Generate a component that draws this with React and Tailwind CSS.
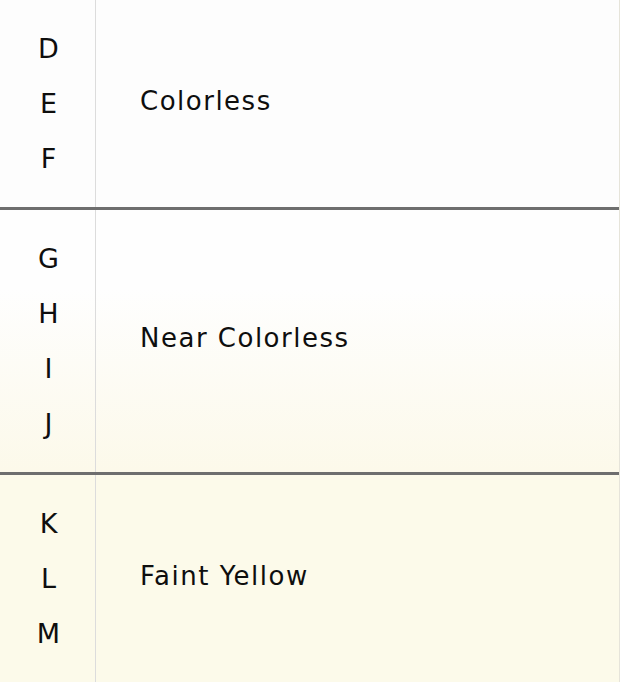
import React from 'react';

const rows = [
    { grades: ['D', 'E', 'F'], label: 'Colorless', bg: 'bg-[#fdfdfd]' },
    { grades: ['G', 'H', 'I', 'J'], label: 'Near Colorless', bg: 'bg-linear-to-b from-[#fefefe] from-30% to-[#fcf9ea]' },
    { grades: ['K', 'L', 'M'], label: 'Faint Yellow', bg: 'bg-[#fcfaea]' }
];

export default function App() {
    return (
        <div className="w-[620px] font-['DejaVu_Sans',sans-serif] text-[#0e0e0e] border-r border-[#e6e4da]">
            {rows.map((row, i) => (
                <div
                    key={row.label}
                    className={`flex ${row.bg} ${i > 0 ? 'border-t-[3px] border-[#6e6e6e]' : ''}`}
                >
                    <div className="w-[96px] shrink-0 border-r border-[#dcdcdc] py-[21px] flex flex-col items-center">
                        {row.grades.map(g => (
                            <span key={g} className="text-[27px] leading-[55px] pl-[2px]">{g}</span>
                        ))}
                    </div>
                    <div className="flex-1 flex items-center pl-[44px] pb-[5px]">
                        <span className="text-[26px] tracking-[1.5px]">{row.label}</span>
                    </div>
                </div>
            ))}
        </div>
    );
}
